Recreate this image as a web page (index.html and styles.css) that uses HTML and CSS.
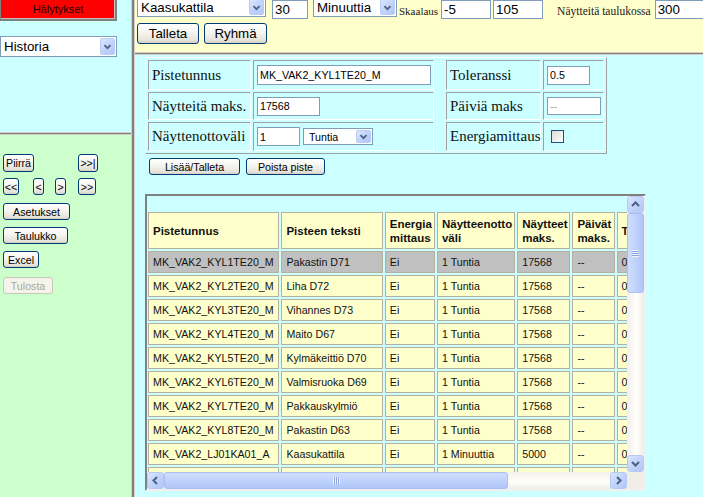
FILE: index.html
```html
<!DOCTYPE html>
<html lang="fi">
<head>
<meta charset="utf-8">
<title>Pisteet</title>
<link rel="stylesheet" href="styles.css">
</head>
<body>
<div class="frameset">
  <div class="col-left">
    <div class="frame nav-top">
      <button class="btn-alarm">Hälytykset</button>
      <div class="select sel-historia">
        <span class="sel-text">Historia</span>
        <span class="sel-btn"><svg viewBox="0 0 15 17" width="15" height="17"><path d="M4 7 L7.5 10.5 L11 7" fill="none" stroke="#4D6185" stroke-width="2"/></svg></span>
      </div>
    </div>
    <div class="hsplit"></div>
    <div class="frame nav-bottom">
      <div class="nav-row row-1">
        <button class="xp-btn small b-piirra">Piirrä</button>
        <button class="xp-btn small b-end">&gt;&gt;|</button>
      </div>
      <div class="nav-row row-2">
        <button class="xp-btn small b-first">&lt;&lt;</button>
        <button class="xp-btn small b-prev">&lt;</button>
        <button class="xp-btn small b-next">&gt;</button>
        <button class="xp-btn small b-last">&gt;&gt;</button>
      </div>
      <button class="xp-btn small b-asetukset">Asetukset</button>
      <button class="xp-btn small b-taulukko">Taulukko</button>
      <button class="xp-btn small b-excel">Excel</button>
      <button class="xp-btn small b-tulosta" disabled>Tulosta</button>
    </div>
  </div>
  <div class="vsplit"></div>
  <div class="col-right">
    <div class="frame toolbar">
      <div class="tool-row">
        <div class="select sel-kaasu">
          <span class="sel-text">Kaasukattila</span>
          <span class="sel-btn"><svg viewBox="0 0 15 17" width="15" height="17"><path d="M4 7 L7.5 10.5 L11 7" fill="none" stroke="#4D6185" stroke-width="2"/></svg></span>
        </div>
        <input class="xp-input tb-input in-30" type="text" value="30">
        <div class="select sel-min">
          <span class="sel-text">Minuuttia</span>
          <span class="sel-btn"><svg viewBox="0 0 15 17" width="15" height="17"><path d="M4 7 L7.5 10.5 L11 7" fill="none" stroke="#4D6185" stroke-width="2"/></svg></span>
        </div>
        <span class="tb-label lbl-skaalaus">Skaalaus</span>
        <input class="xp-input tb-input in-min" type="text" value="-5">
        <input class="xp-input tb-input in-max" type="text" value="105">
        <span class="tb-label lbl-naytteita">Näytteitä taulukossa</span>
        <input class="xp-input tb-input in-300" type="text" value="300">
      </div>
      <div class="tool-row row-btns">
        <button class="xp-btn big b-talleta">Talleta</button>
        <button class="xp-btn big b-ryhma">Ryhmä</button>
      </div>
    </div>
    <div class="hsplit"></div>
    <div class="frame main">
      <table class="point-form">
        <tr class="r1">
          <td class="lbl c-l1">Pistetunnus</td>
          <td class="val c-v1"><input class="xp-input fm-input in-id" type="text" value="MK_VAK2_KYL1TE20_M"></td>
          <td class="gap"></td>
          <td class="lbl c-l2">Toleranssi</td>
          <td class="val c-v2"><input class="xp-input fm-input in-tol" type="text" value="0.5"></td>
        </tr>
        <tr class="r2">
          <td class="lbl">Näytteitä maks.</td>
          <td class="val"><input class="xp-input fm-input in-max-n" type="text" value="17568"></td>
          <td class="gap"></td>
          <td class="lbl">Päiviä maks</td>
          <td class="val"><input class="xp-input fm-input in-days" type="text" value="--"></td>
        </tr>
        <tr class="r3">
          <td class="lbl">Näyttenottoväli</td>
          <td class="val">
            <div class="interval">
              <input class="xp-input fm-input in-int" type="text" value="1">
              <div class="select sel-tuntia">
                <span class="sel-text">Tuntia</span>
                <span class="sel-btn"><svg viewBox="0 0 15 15" width="15" height="15"><path d="M4 6 L7.5 9.5 L11 6" fill="none" stroke="#4D6185" stroke-width="2"/></svg></span>
              </div>
            </div>
          </td>
          <td class="gap"></td>
          <td class="lbl">Energiamittaus</td>
          <td class="val"><input class="xp-check" type="checkbox"></td>
        </tr>
      </table>
      <div class="form-actions">
        <button class="xp-btn small b-lisaa">Lisää/Talleta</button>
        <button class="xp-btn small b-poista">Poista piste</button>
      </div>
      <div class="grid-box">
        <div class="grid-view">
          <table class="points">
            <thead>
              <tr>
                <th class="w1">Pistetunnus</th>
                <th class="w2">Pisteen teksti</th>
                <th class="w3">Energia mittaus</th>
                <th class="w4">Näytteenotto väli</th>
                <th class="w5">Näytteet maks.</th>
                <th class="w6">Päivät maks.</th>
                <th class="w7">Tol.</th>
              </tr>
            </thead>
            <tbody>
              <tr class="sel"><td>MK_VAK2_KYL1TE20_M</td><td>Pakastin D71</td><td>Ei</td><td>1 Tuntia</td><td>17568</td><td>--</td><td>0</td></tr>
              <tr><td>MK_VAK2_KYL2TE20_M</td><td>Liha D72</td><td>Ei</td><td>1 Tuntia</td><td>17568</td><td>--</td><td>0</td></tr>
              <tr><td>MK_VAK2_KYL3TE20_M</td><td>Vihannes D73</td><td>Ei</td><td>1 Tuntia</td><td>17568</td><td>--</td><td>0</td></tr>
              <tr><td>MK_VAK2_KYL4TE20_M</td><td>Maito D67</td><td>Ei</td><td>1 Tuntia</td><td>17568</td><td>--</td><td>0</td></tr>
              <tr><td>MK_VAK2_KYL5TE20_M</td><td>Kylmäkeittiö D70</td><td>Ei</td><td>1 Tuntia</td><td>17568</td><td>--</td><td>0</td></tr>
              <tr><td>MK_VAK2_KYL6TE20_M</td><td>Valmisruoka D69</td><td>Ei</td><td>1 Tuntia</td><td>17568</td><td>--</td><td>0</td></tr>
              <tr><td>MK_VAK2_KYL7TE20_M</td><td>Pakkauskylmiö</td><td>Ei</td><td>1 Tuntia</td><td>17568</td><td>--</td><td>0</td></tr>
              <tr><td>MK_VAK2_KYL8TE20_M</td><td>Pakastin D63</td><td>Ei</td><td>1 Tuntia</td><td>17568</td><td>--</td><td>0</td></tr>
              <tr><td>MK_VAK2_LJ01KA01_A</td><td>Kaasukattila</td><td>Ei</td><td>1 Minuuttia</td><td>5000</td><td>--</td><td>0</td></tr>
              <tr class="empty"><td></td><td></td><td></td><td></td><td></td><td></td><td></td></tr>
            </tbody>
          </table>
        </div>
        <div class="vscroll">
          <span class="sb-btn"><svg viewBox="0 0 15 15" width="15" height="15"><path d="M4 9 L7.5 5.5 L11 9" fill="none" stroke="#4D6185" stroke-width="2"/></svg></span>
          <span class="sb-track-v">
            <span class="sb-thumb-v"><span class="grip-v"></span></span>
          </span>
          <span class="sb-btn"><svg viewBox="0 0 15 15" width="15" height="15"><path d="M4 6 L7.5 9.5 L11 6" fill="none" stroke="#4D6185" stroke-width="2"/></svg></span>
        </div>
        <div class="hscroll">
          <span class="sb-btn"><svg viewBox="0 0 15 15" width="15" height="15"><path d="M9 4 L5.5 7.5 L9 11" fill="none" stroke="#4D6185" stroke-width="2"/></svg></span>
          <span class="sb-track-h">
            <span class="sb-thumb-h"><span class="grip-h"></span></span>
          </span>
          <span class="sb-btn"><svg viewBox="0 0 15 15" width="15" height="15"><path d="M6 4 L9.5 7.5 L6 11" fill="none" stroke="#4D6185" stroke-width="2"/></svg></span>
        </div>
        <div class="sb-corner"></div>
      </div>
    </div>
  </div>
</div>
</body>
</html>
```

FILE: styles.css
```css
html, body {
  margin: 0;
  padding: 0;
  height: 100%;
  overflow: hidden;
}
body {
  font-family: "Liberation Sans", Arial, sans-serif;
  color: #000;
}
.frameset {
  display: flex;
  width: 703px;
  height: 497px;
}
.col-left {
  width: 131px;
  display: flex;
  flex-direction: column;
}
.col-right {
  flex: 1;
  display: flex;
  flex-direction: column;
  min-width: 0;
}
.vsplit {
  width: 4px;
  background: linear-gradient(to right, #D4D0C8 0 1px, #808080 1px 3px, #D4D0C8 3px 4px);
}
.hsplit {
  height: 3px;
  background: linear-gradient(to bottom, #D4D0C8 0 1px, #808080 1px 2px, #D4D0C8 2px 3px);
}
.frame {
  overflow: hidden;
  box-sizing: border-box;
}

/* ---------- left top ---------- */
.nav-top {
  height: 132px;
  background: #CCFFFF;
  display: flex;
  flex-direction: column;
  align-items: flex-start;
}
.btn-alarm {
  width: 117px;
  height: 21px;
  margin: 0;
  padding: 0 0 2px;
  box-sizing: border-box;
  background: #FF0000;
  border: 0;
  border-left: 1px solid #808080;
  border-right: 2px solid #808080;
  border-bottom: 2px solid #808080;
  box-shadow: inset -1px -1px 0 #C0C0C0;
  font-family: "Liberation Sans", Arial, sans-serif;
  font-size: 11px;
  color: #1a0000;
}
.sel-historia {
  margin-top: 15px;
  width: 117px;
  height: 21px;
}

/* ---------- generic XP controls ---------- */
.select {
  display: flex;
  align-items: stretch;
  box-sizing: border-box;
  border: 1px solid #7F9DB9;
  background: #fff;
  font-size: 13.33px;
  flex-shrink: 0;
}
.sel-text {
  flex: 1;
  padding-left: 3px;
  display: flex;
  align-items: center;
  white-space: nowrap;
  overflow: hidden;
}
.sel-btn {
  width: 15px;
  margin: 1px;
  border: 1px solid #B9CCF5;
  border-radius: 2px;
  box-sizing: border-box;
  background: linear-gradient(135deg, #DCE6FD 0%, #C4D5FB 45%, #B2C7F7 100%);
  display: flex;
  align-items: center;
  justify-content: center;
}
.sel-btn svg {
  display: block;
}
.xp-input {
  box-sizing: border-box;
  border: 1px solid #7F9DB9;
  background: #fff;
  margin: 0;
  padding: 0 2px;
  font-family: "Liberation Sans", Arial, sans-serif;
  color: #000;
  outline: none;
  flex-shrink: 0;
}
.xp-btn {
  box-sizing: border-box;
  margin: 0;
  padding: 0;
  border: 1px solid #003C74;
  border-radius: 3px;
  background: linear-gradient(#FFFFFF 0%, #F5F4EF 45%, #E6E3DA 85%, #D6D0C5 100%);
  font-family: "Liberation Sans", Arial, sans-serif;
  color: #000;
  white-space: nowrap;
}
.xp-btn.small {
  font-size: 10.67px;
  height: 17px;
}
.xp-btn.big {
  font-size: 13.33px;
  height: 21px;
}
.xp-btn[disabled] {
  border-color: #C9C7BA;
  color: #ACA899;
  background: #F5F4EA;
}

/* ---------- left bottom ---------- */
.nav-bottom {
  flex: 1;
  background: #CCFFCC;
  padding: 19px 0 0 3px;
  display: flex;
  flex-direction: column;
  align-items: flex-start;
}
.nav-row {
  display: flex;
  align-items: flex-start;
}
.row-1 .xp-btn { height: 18px; }
.b-piirra { width: 31px; }
.b-end { width: 20px; margin-left: 44px; }
.row-2 { margin-top: 6px; }
.b-first { width: 16px; }
.b-prev { width: 11px; margin-left: 14px; }
.b-next { width: 11px; margin-left: 11px; }
.b-last { width: 18px; margin-left: 12px; }
.b-asetukset { width: 67px; margin-top: 8px; }
.b-taulukko { width: 65px; margin-top: 7px; }
.b-excel { width: 36px; margin-top: 7px; }
.b-tulosta { width: 50px; margin-top: 9px; }

/* ---------- toolbar ---------- */
.toolbar {
  height: 52px;
  background: #FFFFCC;
  padding-left: 2px;
}
.tool-row {
  display: flex;
  align-items: flex-start;
}
.sel-kaasu {
  width: 129px;
  height: 20px;
  margin-top: -3px;
}
.tb-input {
  height: 19px;
  font-size: 13.33px;
}
.in-30 { width: 36px; margin-left: 6px; }
.sel-min {
  width: 84px;
  height: 20px;
  margin-top: -3px;
  margin-left: 5px;
}
.tb-label {
  font-family: "Liberation Serif", "Times New Roman", serif;
  color: #1a1a1a;
  white-space: nowrap;
}
.lbl-skaalaus {
  font-size: 11px;
  margin-left: 2px;
  margin-top: 5px;
}
.in-min { width: 50px; margin-left: 3px; }
.in-max { width: 50px; margin-left: 2px; }
.lbl-naytteita {
  font-size: 11.5px;
  margin-left: 14px;
  margin-top: 5px;
}
.in-300 { width: 52px; margin-left: 4px; }
.row-btns {
  margin-top: 4px;
}
.b-talleta { width: 62px; }
.b-ryhma { width: 63px; margin-left: 5px; }

/* ---------- main ---------- */
.main {
  flex: 1;
  background: #CCFFFF;
  padding: 2px 0 0 10px;
}
.point-form {
  border-collapse: separate;
  border-spacing: 2px;
  border: 1px solid;
  border-color: #FFFFFF #A0A0A0 #A0A0A0 #FFFFFF;
  table-layout: fixed;
  width: 462px;
}
.point-form td {
  box-sizing: border-box;
  border: 1px solid;
  border-color: #A0A0A0 #FFFFFF #FFFFFF #A0A0A0;
  padding: 0 3px;
  vertical-align: middle;
}
.point-form td.gap {
  border: 0;
  padding: 0;
}
.point-form .lbl {
  font-family: "Liberation Serif", "Times New Roman", serif;
  font-size: 15px;
  color: #111;
  white-space: nowrap;
}
.c-l1 { width: 103px; }
.c-v1 { width: 181px; }
.gap { width: 8px; }
.c-l2 { width: 95px; }
.c-v2 { width: 61px; }
.r1 td { height: 30px; }
.r2 td { height: 28px; }
.r3 td { height: 29px; }
.fm-input {
  font-size: 10.67px;
  display: block;
}
.in-id { width: 174px; height: 20px; }
.in-tol { width: 43px; height: 19px; }
.in-max-n { width: 63px; height: 19px; }
.in-days { width: 54px; height: 18px; color: #ACA899; }
.interval {
  display: flex;
  align-items: center;
}
.in-int { width: 43px; height: 19px; }
.sel-tuntia {
  width: 70px;
  height: 17px;
  margin-left: 3px;
  font-size: 10.67px;
}
.sel-tuntia .sel-text { padding-left: 5px; }
.xp-check {
  -webkit-appearance: none;
  appearance: none;
  display: block;
  width: 13px;
  height: 13px;
  margin: 0 0 0 4px;
  box-sizing: border-box;
  border: 1px solid #1C5180;
  background: linear-gradient(135deg, #DCDCD7, #FFFFFF);
}
.form-actions {
  display: flex;
  margin: 4px 0 0 4px;
}
.b-lisaa { width: 91px; height: 18px; }
.b-poista { width: 79px; height: 18px; margin-left: 6px; }

/* ---------- grid ---------- */
.grid-box {
  margin-top: 19px;
  width: 501px;
  height: 297px;
  box-sizing: border-box;
  border: 2px solid;
  border-color: #808080 #F0F0F0 #F0F0F0 #808080;
  display: grid;
  grid-template-columns: 480px 17px;
  grid-template-rows: 276px 17px;
}
.grid-view {
  overflow: hidden;
  padding-top: 14px;
}
.points {
  border-collapse: separate;
  border-spacing: 2px;
  table-layout: fixed;
  width: 603px;
  margin-left: -1px;
  font-size: 10.67px;
}
.points th, .points td {
  box-sizing: border-box;
  border: 1px solid #B4B09E;
  background: #FFFFCC;
  text-align: left;
  vertical-align: middle;
  padding: 3px 4px;
  line-height: 14px;
  white-space: nowrap;
  overflow: hidden;
  color: #111;
}
.points th {
  font-size: 11.5px;
  font-weight: bold;
  white-space: normal;
  line-height: 14px;
  height: 37px;
  padding: 2px 4px;
}
.points td { height: 22px; }
.points tr.sel td { background: #C0C0C0; }
.w1 { width: 131px; }
.w2 { width: 101px; }
.w3 { width: 50px; }
.w4 { width: 78px; }
.w5 { width: 53px; }
.w6 { width: 42px; }
.w7 { width: 130px; }

/* ---------- scrollbars ---------- */
.vscroll {
  display: flex;
  flex-direction: column;
  background: linear-gradient(to right, #F3F1EC, #FEFEFB 60%, #EEEDE5);
}
.hscroll {
  display: flex;
  background: linear-gradient(to bottom, #F3F1EC, #FEFEFB 60%, #EEEDE5);
}
.sb-btn {
  width: 17px;
  height: 17px;
  box-sizing: border-box;
  border: 1px solid #B6C9F3;
  border-radius: 3px;
  background: linear-gradient(135deg, #DCE6FD 0%, #C4D5FB 45%, #B2C7F7 100%);
  display: flex;
  align-items: center;
  justify-content: center;
  flex-shrink: 0;
}
.sb-track-v {
  flex: 1;
  display: flex;
  flex-direction: column;
}
.sb-track-h {
  flex: 1;
  display: flex;
}
.sb-thumb-v {
  height: 80px;
  box-sizing: border-box;
  border: 1px solid #A9BFF2;
  border-radius: 3px;
  background: linear-gradient(to right, #D0DDFD, #BCD0FB 60%, #B0C6F7);
  display: flex;
  align-items: center;
  justify-content: center;
}
.sb-thumb-h {
  width: 344px;
  box-sizing: border-box;
  border: 1px solid #A9BFF2;
  border-radius: 3px;
  background: linear-gradient(to bottom, #D0DDFD, #BCD0FB 60%, #B0C6F7);
  display: flex;
  align-items: center;
  justify-content: center;
}
.grip-v {
  width: 7px;
  height: 7px;
  background: repeating-linear-gradient(to bottom, #EEF4FE 0 1px, #8CA4E0 1px 2px);
}
.grip-h {
  width: 7px;
  height: 7px;
  background: repeating-linear-gradient(to right, #EEF4FE 0 1px, #8CA4E0 1px 2px);
}
.sb-corner {
  background: #F0EEE6;
}
```
